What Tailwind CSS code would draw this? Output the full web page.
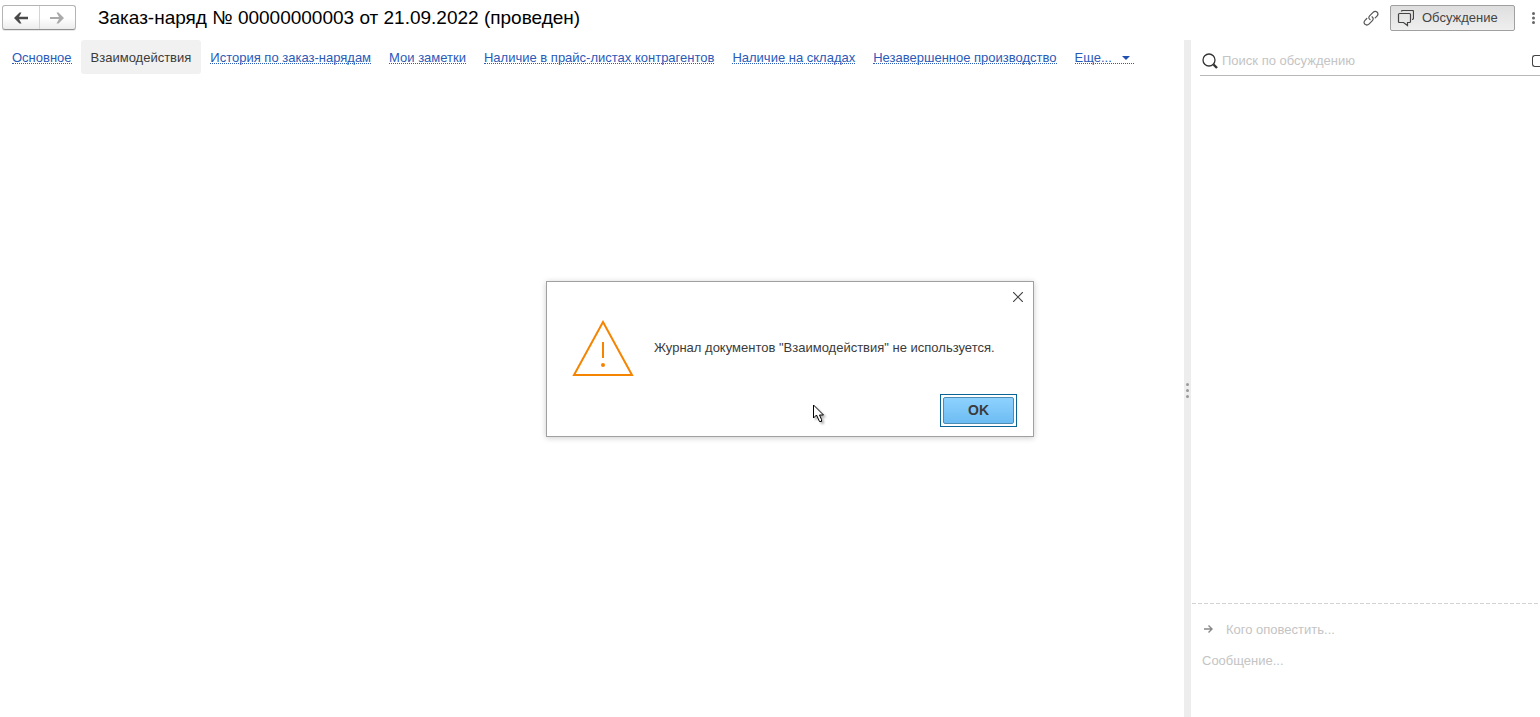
<!DOCTYPE html>
<html lang="ru">
<head>
  <meta charset="UTF-8" />
  <title>Заказ-наряд</title>
  <script src="https://cdn.jsdelivr.net/npm/@tailwindcss/browser@4"></script>
</head>
<body class="relative flex flex-col h-screen overflow-hidden bg-white font-['Liberation_Sans',Arial,sans-serif] text-[13px] leading-4 text-[#3b3b3b]">

  <header class="flex items-center h-10 pb-1 pl-0.5 shrink-0">
    <div class="flex h-[25px] w-[74px] mb-px border border-[#b4b4b4] border-b-[#8f8f8f] rounded-[3px] bg-linear-to-b from-white from-50% to-[#ececec] shadow-[0_1px_0_#e8e8e8]">
      <button aria-label="Назад" class="flex-1 flex items-center justify-center border-r border-[#d4d4d4]">
        <svg class="w-4 h-3" viewBox="0 0 16 12" fill="#4a4a4a"><path d="M1 6L6.5 0.5H8.5L6 4.7H15V7.3H6L8.5 11.5H6.5Z" /></svg>
      </button>
      <button aria-label="Вперед" class="flex-1 flex items-center justify-center">
        <svg class="w-4 h-3" viewBox="0 0 16 12" fill="#aaa"><path d="M15 6L9.5 0.5H7.5L10 5H1V7H10L7.5 11.5H9.5Z" /></svg>
      </button>
    </div>
    <h1 class="ml-[22px] text-[19px] leading-6 text-black whitespace-nowrap">Заказ-наряд № 00000000003 от 21.09.2022 (проведен)</h1>

    <div class="ml-auto flex items-center shrink-0">
      <button aria-label="Получить ссылку" class="mr-2.5">
        <svg class="w-[18px] h-[18px]" viewBox="0 0 18 18" fill="none" stroke="#555" stroke-width="1.2" stroke-linecap="round"><path d="M8 10.6C6.6 9.6 6.4 8 7.6 6.8L10.8 3.6C12.2 2.2 14 2.1 15.2 3.2C16.3 4.3 16.2 5.9 15 7.1L13.2 8.9M10 7.8C11.4 8.8 11.6 10.4 10.4 11.6L7.2 14.8C5.8 16.2 4 16.3 2.9 15.2C1.7 14.1 1.8 12.5 3 11.3L4.8 9.5" /></svg>
      </button>
      <button class="flex items-center h-[26px] w-[125px] pl-1.5 border border-[#a0a0a0] rounded-[2px] bg-linear-to-b from-[#dedede] to-[#efefef] text-[#444]">
        <svg class="w-[17px] h-[17px] mr-2" viewBox="0 0 17 17" fill="none" stroke="#444" stroke-width="1.2"><path d="M4.5 1.5Q4.5 0.5 5.5 0.5H15.5Q16.5 0.5 16.5 1.5V8Q16.5 9.5 15 9.5" /><path d="M2.5 3.5H12.5Q13.5 3.5 13.5 4.5V11.5Q13.5 12.5 12.5 12.5H10.5V15.5L6.5 12.5H2.5Q1.5 12.5 1.5 11.5V4.5Q1.5 3.5 2.5 3.5Z" /></svg>
        Обсуждение
      </button>
      <button aria-label="Меню" class="ml-4 w-[9px] overflow-hidden">
        <svg class="w-[5px] h-3" viewBox="0 0 5 12" fill="#666"><circle cx="2.5" cy="1.5" r="1.5" /><circle cx="2.5" cy="6" r="1.5" /><circle cx="2.5" cy="10.5" r="1.5" /></svg>
      </button>
    </div>
  </header>

  <div class="flex flex-1 min-h-0">
    <main class="flex-1 min-w-0">
      <nav class="flex items-center h-[34px] pl-[3px] whitespace-nowrap text-[#2a5ab8] *:px-[9px] *:pt-0.5">
        <a href="#"><span class="inline-block leading-[10px] border-b border-dotted">Основное</span></a>
        <a href="#" aria-current="page" class="self-stretch flex items-center rounded-[3px] bg-[#f1f1f1] text-[#3b3b3b]"><span class="px-px">Взаимодействия</span></a>
        <a href="#"><span class="inline-block leading-[10px] border-b border-dotted">История по заказ-нарядам</span></a>
        <a href="#"><span class="inline-block leading-[10px] border-b border-dotted">Мои заметки</span></a>
        <a href="#"><span class="inline-block leading-[10px] border-b border-dotted">Наличие в прайс-листах контрагентов</span></a>
        <a href="#"><span class="inline-block leading-[10px] border-b border-dotted">Наличие на складах</span></a>
        <a href="#"><span class="inline-block leading-[10px] border-b border-dotted">Незавершенное производство</span></a>
        <button><span class="inline-flex items-center leading-[10px] border-b border-dotted">Еще...<svg class="w-2 h-1 ml-2.5 mr-1" viewBox="0 0 8 4" fill="#1f4fb0"><path d="M0 0H8L4 4Z" /></svg></span></button>
      </nav>
    </main>

    <div class="w-[7px] shrink-0 flex items-center justify-center bg-[#ededed]">
      <svg class="w-[3px] h-[15px] mt-6" viewBox="0 0 3 15" fill="#999"><circle cx="1.5" cy="1.5" r="1.5" /><circle cx="1.5" cy="7.5" r="1.5" /><circle cx="1.5" cy="13.5" r="1.5" /></svg>
    </div>

    <aside class="w-[349px] shrink-0 flex flex-col">
      <div class="ml-[9px] flex items-center h-9 pt-1.5 border-b border-[#b8b8b8]">
        <svg class="w-4 h-4 ml-0.5 mr-1 shrink-0" viewBox="0 0 16 16" fill="none" stroke="#333"><circle cx="7" cy="7" r="6" stroke-width="1.3" /><path d="M11.5 11.5L15 15" stroke-width="2.4" /></svg>
        <input type="text" aria-label="Поиск по обсуждению" placeholder="Поиск по обсуждению" class="flex-1 min-w-0 outline-none placeholder:text-[#c4c4c4]" />
        <button aria-label="Показать обсуждения" class="w-2 h-3 border border-r-0 border-[#444] rounded-l-[3px]"></button>
      </div>
      <div class="flex-1"></div>
      <div class="h-[114px]">
        <svg class="block w-full h-px pl-px" stroke="#d2d2d2"><line x1="0" y1="0.5" x2="100%" y2="0.5" stroke-dasharray="4 2" /></svg>
        <div class="flex items-center mt-[18px] ml-[13px] h-4">
          <svg class="w-[9px] h-2 mb-0.5 mr-[13px]" viewBox="0 0 9 8" fill="none" stroke="#888" stroke-width="1.4"><path d="M0 4H8M4.5 0.5L8 4L4.5 7.5" /></svg>
          <input type="text" aria-label="Кого оповестить" placeholder="Кого оповестить..." class="flex-1 min-w-0 outline-none placeholder:text-[#c4c4c4]" />
        </div>
        <textarea aria-label="Сообщение" placeholder="Сообщение..." class="block mt-[15px] ml-[11px] h-12 w-80 resize-none outline-none placeholder:text-[#c4c4c4]"></textarea>
      </div>
    </aside>
  </div>

  <div class="absolute inset-0 pl-10 flex items-center justify-center">
    <div role="alertdialog" aria-describedby="message" class="relative w-[488px] h-[156px] border border-[#a0a0a0] bg-white shadow-[0_1px_6px_rgba(0,0,0,0.2)] px-4 pb-[9px] flex flex-col">
      <button aria-label="Закрыть" class="absolute top-2.5 right-2.5">
        <svg class="w-2.5 h-2.5" viewBox="0 0 10 10" fill="none" stroke="#444" stroke-width="1.2"><path d="M0 0L10 10M10 0L0 10" /></svg>
      </button>
      <div class="flex items-center flex-1 pt-[22px] pl-[9px]">
        <svg class="w-[62px] h-[57px] mr-5 shrink-0" viewBox="0 0 62 57" fill="none" stroke="#f58400" stroke-width="2"><path d="M31 2L60 55H2Z" /><path d="M31 22V38" /><circle cx="31" cy="45" r="2" fill="#f58400" stroke="none" /></svg>
        <p id="message" class="pb-0.5">Журнал документов "Взаимодействия" не используется.</p>
      </div>
      <button class="self-end w-[77px] h-[33px] p-0.5 border border-[#0a6496]">
        <span class="flex items-center justify-center h-full border border-[#4c8db5] rounded-[2px] bg-linear-to-b from-[#8ed2ff] to-[#6cbcf2] text-sm font-bold">OK</span>
      </button>
    </div>
  </div>

  <!-- mouse pointer -->
  <svg class="absolute left-[813px] top-[404px] w-3 h-[19px] drop-shadow-[2px_2px_1px_rgba(0,0,0,0.3)]" viewBox="0 0 12 19" fill="#fff" stroke="#000"><path d="M0.5 1V14L3.5 11L6.5 17.5H8.5V15.5L6.5 11H10.5Z" /></svg>
</body>
</html>
